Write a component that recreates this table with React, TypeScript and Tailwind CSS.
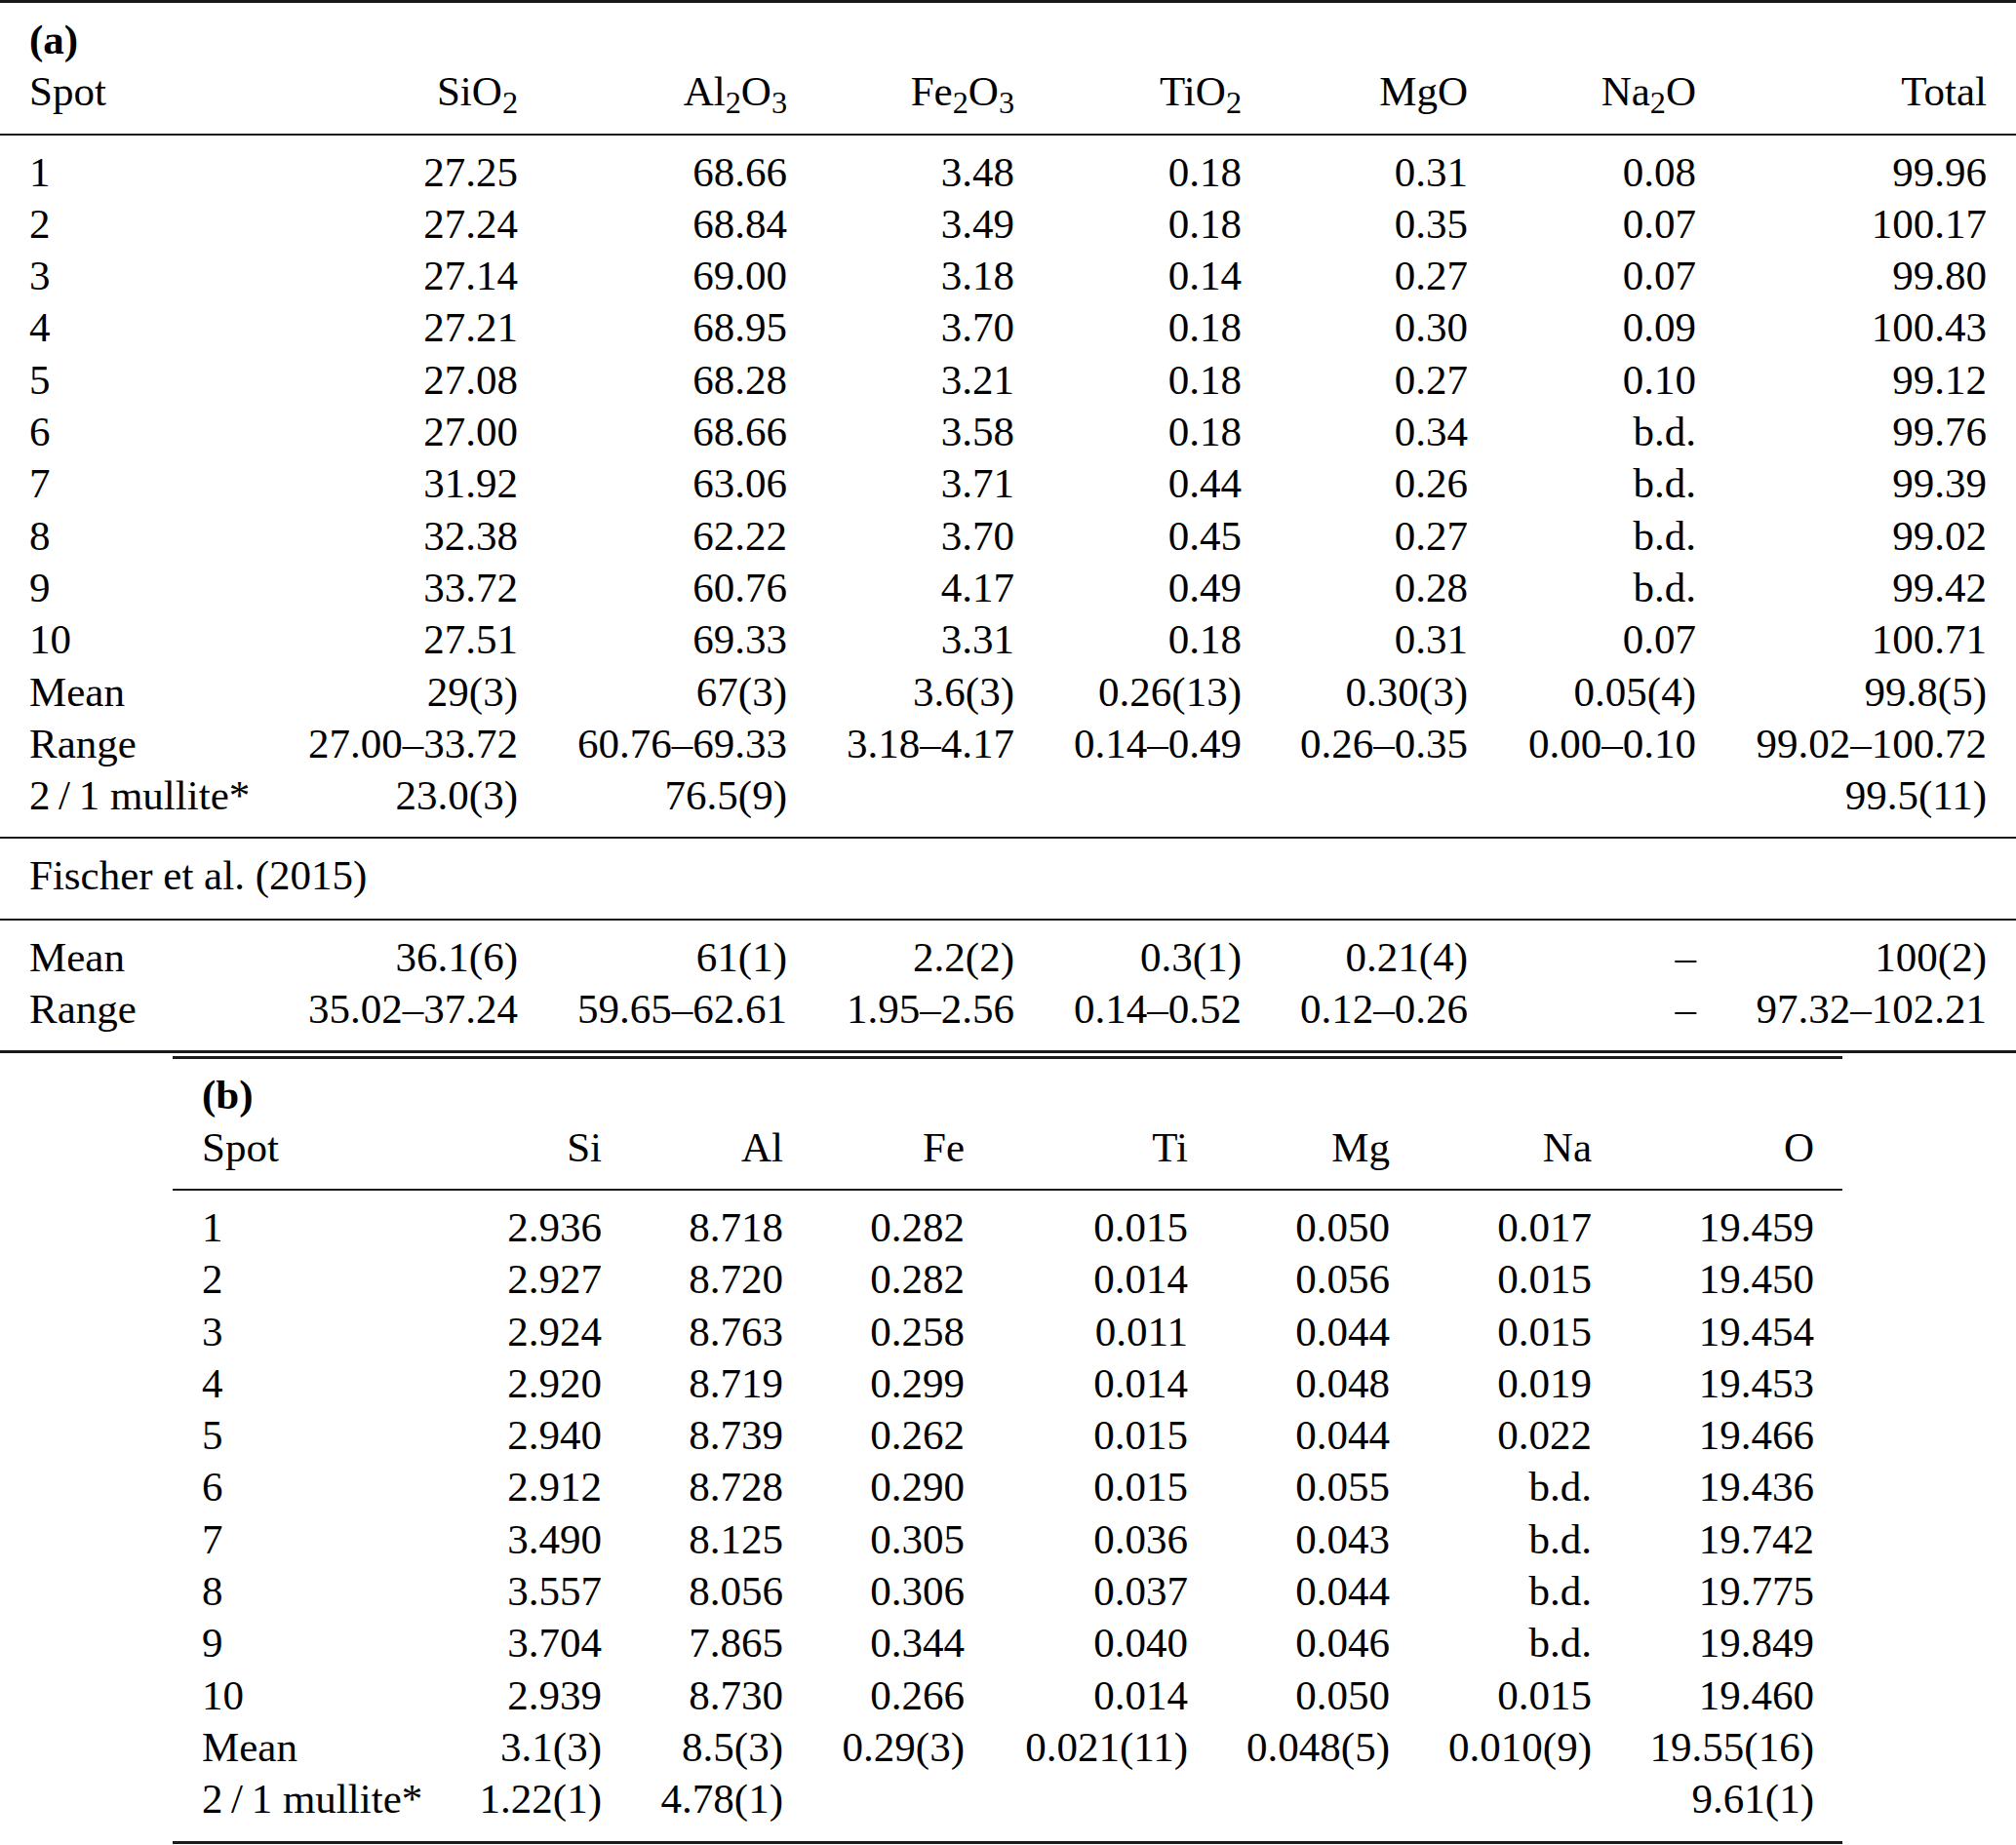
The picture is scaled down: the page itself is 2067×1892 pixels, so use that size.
import React from "react";

type Cell = React.ReactNode;

const colsA = "grid grid-cols-[260px_241px_276px_233px_233px_232px_234px_298px]";
const colsB = "grid grid-cols-[260px_150px_186px_186px_229px_207px_207px_228px]";

function Row({ cells, cols }: { cells: Cell[]; cols: string }) {
  return (
    <div className={cols}>
      {cells.map((c, i) => (
        <div key={i} className={i === 0 ? "text-left whitespace-nowrap" : "text-right whitespace-nowrap"}>
          {c}
        </div>
      ))}
    </div>
  );
}

const S = ({ children }: { children: React.ReactNode }) => <sub>{children}</sub>;

const mullite = "2\u2009/\u20091 mullite*";

const headA: Cell[] = [
  "Spot",
  <>SiO<S>2</S></>,
  <>Al<S>2</S>O<S>3</S></>,
  <>Fe<S>2</S>O<S>3</S></>,
  <>TiO<S>2</S></>,
  "MgO",
  <>Na<S>2</S>O</>,
  "Total",
];

const rowsA: string[][] = [
  ["1", "27.25", "68.66", "3.48", "0.18", "0.31", "0.08", "99.96"],
  ["2", "27.24", "68.84", "3.49", "0.18", "0.35", "0.07", "100.17"],
  ["3", "27.14", "69.00", "3.18", "0.14", "0.27", "0.07", "99.80"],
  ["4", "27.21", "68.95", "3.70", "0.18", "0.30", "0.09", "100.43"],
  ["5", "27.08", "68.28", "3.21", "0.18", "0.27", "0.10", "99.12"],
  ["6", "27.00", "68.66", "3.58", "0.18", "0.34", "b.d.", "99.76"],
  ["7", "31.92", "63.06", "3.71", "0.44", "0.26", "b.d.", "99.39"],
  ["8", "32.38", "62.22", "3.70", "0.45", "0.27", "b.d.", "99.02"],
  ["9", "33.72", "60.76", "4.17", "0.49", "0.28", "b.d.", "99.42"],
  ["10", "27.51", "69.33", "3.31", "0.18", "0.31", "0.07", "100.71"],
  ["Mean", "29(3)", "67(3)", "3.6(3)", "0.26(13)", "0.30(3)", "0.05(4)", "99.8(5)"],
  ["Range", "27.00–33.72", "60.76–69.33", "3.18–4.17", "0.14–0.49", "0.26–0.35", "0.00–0.10", "99.02–100.72"],
  [mullite, "23.0(3)", "76.5(9)", "", "", "", "", "99.5(11)"],
];

const fischer: string[][] = [
  ["Mean", "36.1(6)", "61(1)", "2.2(2)", "0.3(1)", "0.21(4)", "–", "100(2)"],
  ["Range", "35.02–37.24", "59.65–62.61", "1.95–2.56", "0.14–0.52", "0.12–0.26", "–", "97.32–102.21"],
];

const headB: Cell[] = ["Spot", "Si", "Al", "Fe", "Ti", "Mg", "Na", "O"];

const rowsB: string[][] = [
  ["1", "2.936", "8.718", "0.282", "0.015", "0.050", "0.017", "19.459"],
  ["2", "2.927", "8.720", "0.282", "0.014", "0.056", "0.015", "19.450"],
  ["3", "2.924", "8.763", "0.258", "0.011", "0.044", "0.015", "19.454"],
  ["4", "2.920", "8.719", "0.299", "0.014", "0.048", "0.019", "19.453"],
  ["5", "2.940", "8.739", "0.262", "0.015", "0.044", "0.022", "19.466"],
  ["6", "2.912", "8.728", "0.290", "0.015", "0.055", "b.d.", "19.436"],
  ["7", "3.490", "8.125", "0.305", "0.036", "0.043", "b.d.", "19.742"],
  ["8", "3.557", "8.056", "0.306", "0.037", "0.044", "b.d.", "19.775"],
  ["9", "3.704", "7.865", "0.344", "0.040", "0.046", "b.d.", "19.849"],
  ["10", "2.939", "8.730", "0.266", "0.014", "0.050", "0.015", "19.460"],
  ["Mean", "3.1(3)", "8.5(3)", "0.29(3)", "0.021(11)", "0.048(5)", "0.010(9)", "19.55(16)"],
  [mullite, "1.22(1)", "4.78(1)", "", "", "", "", "9.61(1)"],
];

export default function App() {
  return (
    <div className="w-[2067px] h-[1892px] overflow-hidden bg-white text-black font-['Liberation_Serif',serif] text-[43px] leading-[53.3px]">
      {/* Table (a) */}
      <div className="h-[3px] bg-[#1a1a1a]" />
      <div className="px-[30px] pt-[11px] pb-[16px]">
        <div className="font-bold">(a)</div>
        <Row cells={headA} cols={colsA} />
      </div>
      <div className="h-[2px] bg-[#1a1a1a]" />
      <div className="px-[30px] pt-[11px] pb-[16px]">
        {rowsA.map((r, i) => (
          <Row key={i} cells={r} cols={colsA} />
        ))}
      </div>
      <div className="h-[2px] bg-[#1a1a1a]" />
      <div className="px-[30px] pt-[11px] pb-[17px]">
        <div>Fischer et al. (2015)</div>
      </div>
      <div className="h-[2px] bg-[#1a1a1a]" />
      <div className="px-[30px] pt-[11px] pb-[16px]">
        {fischer.map((r, i) => (
          <Row key={i} cells={r} cols={colsA} />
        ))}
      </div>
      <div className="h-[3px] bg-[#1a1a1a]" />

      {/* Table (b) */}
      <div className="ml-[177px] w-[1712px] mt-[3px]">
        <div className="h-[3px] bg-[#1a1a1a]" />
        <div className="pl-[30px] pr-[29px] pt-[10px] pb-[16px]">
          <div className="font-bold">(b)</div>
          <Row cells={headB} cols={colsB} />
        </div>
        <div className="h-[2px] bg-[#1a1a1a]" />
        <div className="pl-[30px] pr-[29px] pt-[11px] pb-[16px]">
          {rowsB.map((r, i) => (
            <Row key={i} cells={r} cols={colsB} />
          ))}
        </div>
        <div className="h-[3px] bg-[#1a1a1a]" />
      </div>
    </div>
  );
}
